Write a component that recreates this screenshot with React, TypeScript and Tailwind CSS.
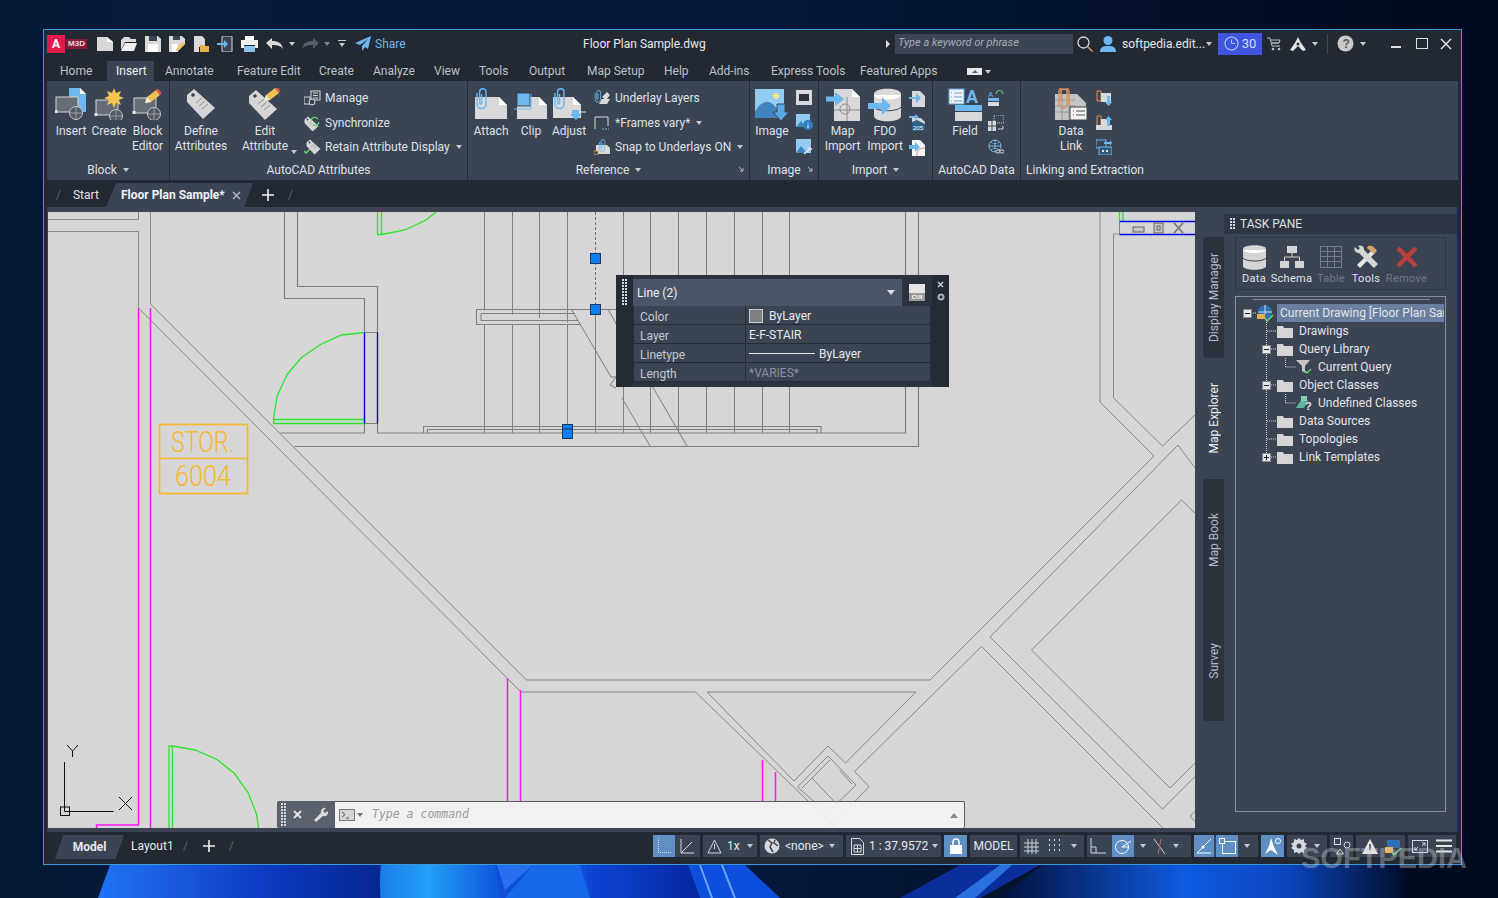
import type { ReactNode } from "react";

const G = "#d9d9d9";
const B = "#6cb8f0";

function Svg({ w, h, children, className }: { w: number; h: number; children: ReactNode; className?: string }) {
  return (
    <svg width={w} height={h} viewBox={`0 0 ${w} ${h}`} className={`shrink-0 ${className ?? ""}`}>
      {children}
    </svg>
  );
}

function Caret({ dim }: { dim?: boolean }) {
  return <span className={`inline-block shrink-0 border-x-[3px] border-t-[4px] border-x-transparent ${dim ? "border-t-[#7c838e]" : "border-t-[#c5c9ce]"}`} />;
}

function Corner() {
  return (
    <Svg w={7} h={7}>
      <path d="M1 1l4 4M5 2v3H2" stroke="#b5bac2" fill="none" />
    </Svg>
  );
}

/* ---------- large ribbon icons ---------- */
const blockBase = (x: number, y: number) => (
  <>
    <rect x={x} y={y} width={22} height={15} fill="#666c78" stroke="#d5d5d5" />
    <rect x={x - 1.5} y={y + 13} width={3} height={3} fill="#e5e5e5" />
    <circle cx={x + 20} cy={y + 16} r={6.5} fill="#545a66" stroke="#c5c5c5" />
    <path d={`M${x + 20} ${y + 10}v12M${x + 14} ${y + 16}h12`} stroke="#c5c5c5" strokeWidth={0.6} />
  </>
);

const Pencil = ({ x, y }: { x: number; y: number }) => (
  <g transform={`translate(${x} ${y})`}>
    <path d="M0 13l2-6 9-7 4 5-9 7z" fill="#f0c14f" />
    <path d="M11 0l2-1.5 3.5 4.5-1.5 2z" fill="#e55353" />
    <path d="M0 13l2-6 4 5z" fill="#ececec" />
  </g>
);

const Doc = ({ x, y, w, h, c = G }: { x: number; y: number; w: number; h: number; c?: string }) => (
  <>
    <path d={`M${x} ${y}h${w - 8}l8 8v${h - 8}h-${w}z`} fill={c} />
    <path d={`M${x + w - 8} ${y}l8 8h-8z`} fill="#fff" />
  </>
);

const Clip = ({ x, y, c = B }: { x: number; y: number; c?: string }) => (
  <g transform={`translate(${x} ${y})`}>
    <path d="M0 6v11a4.500 4.500 0 0 0 9 0V5a3.200 3.200 0 0 0-6.400 0v11a1 1 0 0 0 2 0V7" fill="none" stroke={c} strokeWidth={1.4} />
  </g>
);

const InsertIcon = () => (
  <Svg w={32} h={32}>
    <path d="M14 0h11l6 6v18H14z" fill={B} />
    <path d="M25 0l6 6h-6z" fill="#fff" />
    {blockBase(1, 9)}
  </Svg>
);
const CreateIcon = () => (
  <Svg w={32} h={32}>
    {blockBase(3, 12)}
    <path d="M21 0l2 5 5-2-2 5 5 2-5 2 2 5-5-2-2 5-2-5-5 2 2-5-5-2 5-2-2-5 5 2z" fill="#f5c452" />
  </Svg>
);
const EditorIcon = () => (
  <Svg w={32} h={32}>
    {blockBase(2, 10)}
    <Pencil x={13} y={2} />
  </Svg>
);
const Tag = ({ x, y, s = 1 }: { x: number; y: number; s?: number }) => (
  <g transform={`translate(${x} ${y}) scale(${s})`}>
    <path d="M1 7L8 1l21 19-12 11L1 14z" fill="#d5d5d5" />
    <circle cx={7} cy={7} r={1.8} fill="#3b4453" />
    <path d="M10 15l6-5M13 18l6-5M16 21l6-5" stroke="#8e8e8e" />
  </g>
);
const DefineIcon = () => (
  <Svg w={32} h={32}>
    <Tag x={1} y={0} />
  </Svg>
);
const EditAttrIcon = () => (
  <Svg w={34} h={32}>
    <Tag x={0} y={1} />
    <Pencil x={16} y={0} />
  </Svg>
);
const AttachIcon = () => (
  <Svg w={34} h={32}>
    <Doc x={1} y={9} w={32} h={22} />
    <Clip x={3} y={-1} />
  </Svg>
);
const ClipIcon = () => (
  <Svg w={34} h={32}>
    <Doc x={3} y={9} w={30} h={22} />
    <rect x={3} y={5} width={13} height={13} fill={B} stroke="#3b4453" />
    <path d="M0 21h17V6" stroke={B} fill="none" />
  </Svg>
);
const AdjustIcon = () => (
  <Svg w={34} h={32}>
    <Doc x={1} y={9} w={28} h={21} />
    <Clip x={3} y={-1} />
    <path d="M17 24h17" stroke="#e5e5e5" />
    <path d="M20 22h7v4h3l-6 6-6-6h2z" fill={B} />
  </Svg>
);
const ImageIcon = () => (
  <Svg w={34} h={34}>
    <rect x={0} y={1} width={29} height={29} fill="#93cbf2" />
    <circle cx={21} cy={8} r={3} fill="#f2e58a" />
    <path d="M0 24c5-9 9-10 13-10s8 5 12 11l4 5H0z" fill="#3f84bf" />
    <path d="M22 16h8v8h4l-8 9-8-9h4z" fill="#5aa9e6" stroke="#3b4453" />
  </Svg>
);
const MapImportIcon = () => (
  <Svg w={34} h={34}>
    <path d="M8 1h18l8 8v24H8z" fill={G} />
    <path d="M26 1l8 8h-8z" fill="#fff" />
    <path d="M8 22h26M21 9v24" stroke="#8a8a8a" />
    <circle cx={19} cy={21} r={5} fill="none" stroke="#8a8a8a" />
    <path d="M0 12h9V6l9 9-9 9v-6H0z" fill={B} transform="translate(0 -1) scale(1 .8)" />
  </Svg>
);
const FdoIcon = () => (
  <Svg w={34} h={34}>
    <path d="M6 6c0-7 27-7 27 0v22c0 7-27 7-27 0z" fill="#d9d9d9" />
    <path d="M6 7c2 6 25 6 27 0" fill="#fff" />
    <path d="M6 19c3 5 24 5 27 0" stroke="#3b4453" fill="none" />
    <path d="M0 15h14v-6l9 9-9 9v-6H0z" fill={B} />
  </Svg>
);
const FieldIcon = () => (
  <Svg w={34} h={34}>
    <rect x={1} y={1} width={15} height={15} fill="#f2f2f2" stroke="#5aa9e6" />
    <path d="M3 5h1M6 5h8M3 9h1M6 9h8M3 13h1M6 13h8" stroke="#5aa9e6" />
    <text x={18} y={15} fontSize={18} fontWeight={700} fill={B} fontFamily="Roboto">A</text>
    <rect x={7} y={17} width={27} height={6} fill={B} />
    <rect x={7} y={24} width={27} height={9} fill={G} />
  </Svg>
);
const DataLinkIcon = () => (
  <Svg w={34} h={32}>
    <path d="M1 6h22l9 9v17H1z" fill="#c4c4c4" />
    <path d="M1 12h20M1 18h20M1 24h20M8 6v26M15 6v26" stroke="#9a9a9a" />
    <path d="M7 14V4a3 3 0 0 1 6 0v12a4 4 0 0 1-8 0V4a5 5 0 0 1 10 0v12" fill="none" stroke="#e0935a" strokeWidth={1.5} />
    <rect x={16} y={19} width={17} height={13} fill="#f2f2f2" stroke="#3b4453" />
    <path d="M19 23h1M22 23h9M19 27h1M22 27h9" stroke="#555" />
  </Svg>
);

/* ---------- small ribbon icons ---------- */
const S16 = ({ children }: { children: ReactNode }) => <Svg w={17} h={16}>{children}</Svg>;
const smallIcons: Record<string, ReactNode> = {
  manage: <S16><rect x={7} y={1} width={9} height={9} fill="none" stroke={G} /><path d="M9 3h5M9 5.500h5M9 8h5" stroke={G} /><path d="M0 7h6v7H0z" fill="none" stroke={G} /><circle cx={8} cy={12} r={3} fill="#3b4453" stroke={G} /></S16>,
  sync: <S16><Tag x={0} y={1} s={0.5} /><path d="M7 5a4 4 0 0 1 7-1M15 7a4 4 0 0 1-6 3" stroke="#6fcf80" fill="none" strokeWidth={1.4} /></S16>,
  retain: <S16><Tag x={2} y={0} s={0.5} /><path d="M0 12l2 2 4-4" stroke="#6fcf80" fill="none" strokeWidth={1.5} /></S16>,
  underlay: <S16><g transform="scale(.6)"><Clip x={2} y={-1} /></g><path d="M8 7l5-5 3 3-4 5zM5 14l3-5h8l-3 5z" fill={G} /></S16>,
  frames: <S16><path d="M1 14V2h13v9" fill="none" stroke={G} /><path d="M8 14h7" stroke={B} strokeDasharray="2 1" /></S16>,
  snap: <S16><path d="M2 6h11l3 3v6H2z" fill={G} /><g transform="scale(.6)"><Clip x={9} y={-1} /></g><rect x={0} y={12} width={4} height={4} fill="#3b4453" stroke="#e8973a" /></S16>,
  imgFrame: <Svg w={16} h={16}><rect width={16} height={15} fill={G} /><rect x={3} y={4} width={10} height={7} fill="#2b313c" /></Svg>,
  imgInfo: <Svg w={17} h={17}><rect width={14} height={13} fill="#93cbf2" /><path d="M0 13l5-6 5 6z" fill="#3f84bf" /><circle cx={12} cy={11} r={5} fill="#2f7fc2" /><path d="M12 9v.8M12 11v3" stroke="#fff" /></Svg>,
  imgEdit: <Svg w={17} h={17}><rect width={15} height={14} fill="#93cbf2" /><path d="M0 14l5-7 6 7z" fill="#3f84bf" /><path d="M8 15l7-6M13 8a2 2 0 0 0 3 2" stroke="#e5e5e5" strokeWidth={1.6} fill="none" /></Svg>,
  imp1: <Svg w={16} h={17}><path d="M3 1h8l5 5v11H3z" fill={G} /><path d="M0 7h7V3l5 5-5 5V9H0z" fill={B} /></Svg>,
  imp2: <Svg w={16} h={17}><path d="M3 4h9l4 4v9H3z" fill={G} /><path d="M0 2h6V0l4 3-4 3V4H0z" fill={B} /><path d="M3 8l5-2 8 4v7H3z" fill="#2f5f86" /><text x={4} y={16} fontSize={6} fill="#fff" fontFamily="Liberation Sans">205</text></Svg>,
  imp3: <Svg w={16} h={17}><path d="M3 1h8l5 5v11H3z" fill="#f5f5f5" /><path d="M8 17c0-6 2-8 8-8" stroke="#e38b8b" fill="none" /><path d="M0 6h6V3l5 5-5 5v-3H0z" fill={B} /></Svg>,
  fld1: <Svg w={16} h={16}><text x={0} y={7} fontSize={8} fill={B} fontFamily="Roboto">A</text><path d="M8 4a3 3 0 0 1 7 0" stroke="#6fcf80" fill="none" /><rect y={8} width={11} height={3} fill={B} /><rect y={12} width={11} height={4} fill={G} /></Svg>,
  fld2: <Svg w={16} h={16}><rect x={6} y={0} width={10} height={8} fill="none" stroke={G} strokeDasharray="1 1" /><rect x={0} y={6} width={8} height={10} fill={G} /><path d="M4 6v10M0 11h8" stroke="#3b4453" /><path d="M10 14h5v-3" stroke={G} fill="none" /></Svg>,
  fld3: <Svg w={16} h={16}><circle cx={7} cy={7} r={6} fill="none" stroke="#7db7de" /><path d="M1 7h12M7 1v12M3 3c3 2 5 2 8 0M3 11c3-2 5-2 8 0" stroke="#7db7de" /><rect x={8} y={11} width={4} height={3} rx={1.5} fill="#3b4453" stroke="#e5e5e5" /><rect x={12} y={11} width={4} height={3} rx={1.5} fill="#3b4453" stroke="#e5e5e5" /></Svg>,
  lnk1: <Svg w={16} h={16}><path d="M1 1h4v10H1z" fill="none" stroke="#e0935a" /><rect x={5} y={3} width={10} height={9} fill={G} /><path d="M11 6h3v6h2l-3.500 4L9 12h2z" fill={B} /></Svg>,
  lnk2: <Svg w={16} h={16}><path d="M1 1h4v10H1z" fill="none" stroke="#e0935a" /><rect x={0} y={10} width={16} height={5} fill={G} /><rect x={5} y={4} width={6} height={6} fill={G} /><path d="M11 11h3V5h2l-3.500-4L9 5h2z" fill={B} /></Svg>,
  lnk3: <Svg w={16} h={16}><rect x={0} y={1} width={10} height={8} fill="none" stroke={B} /><rect x={3} y={8} width={13} height={8} fill="#33587a" stroke={B} /><path d="M6 12h2M10 12h2" stroke="#e5e5e5" strokeWidth={2} /><path d="M8 3h6V1l2 3-2 3V5H8z" fill={B} /></Svg>,
};

/* ---------- ribbon ---------- */
function Large({ icon, lines, w, caret }: { icon: ReactNode; lines: string[]; w: string; caret?: boolean }) {
  return (
    <div className={`${w} relative flex shrink-0 flex-col items-center`}>
      <div className="flex h-[43px] items-start justify-center pt-[7px]">{icon}</div>
      {lines.map((l) => (
        <div key={l} className="whitespace-nowrap text-[12px] leading-[15px] text-[#dfe2e6]">{l}</div>
      ))}
      {caret && <span className="absolute right-[-2px] top-[56px]"><Caret /></span>}
    </div>
  );
}

function SmallRow({ icon, label, caret }: { icon: string; label: string; caret?: boolean }) {
  return (
    <div className="flex h-[24.5px] items-center gap-[4px] whitespace-nowrap text-[12px] text-[#dfe2e6]">
      <span className="flex w-[17px] justify-center">{smallIcons[icon]}</span>
      <span>{label}</span>
      {caret && <span className="ml-[2px] flex"><Caret /></span>}
    </div>
  );
}

function IconCol({ icons, className }: { icons: string[]; className: string }) {
  return (
    <div className={`flex shrink-0 flex-col items-center pt-[5px] ${className}`}>
      {icons.map((i) => (
        <div key={i} className="flex h-[24.5px] items-center">{smallIcons[i]}</div>
      ))}
    </div>
  );
}

function Panel({ w, title, caret, corner, children, last, pad }: { w: string; title: string; caret?: boolean; corner?: boolean; children: ReactNode; last?: boolean; pad: string }) {
  return (
    <div className={`${w} flex shrink-0 flex-col ${last ? "" : "border-r border-[#262c36]"}`}>
      <div className={`flex h-[80px] ${pad}`}>{children}</div>
      <div className={`relative -mt-px flex h-[19px] items-center gap-[6px] text-[12px] text-[#dfe2e6] ${last ? "pl-[5px]" : "justify-center"}`}>
        <span className="whitespace-nowrap">{title}</span>
        {caret && <Caret />}
        {corner && <span className="absolute right-[4px] top-[6px] flex"><Corner /></span>}
      </div>
    </div>
  );
}

function Ribbon() {
  return (
    <div className="mx-[3px] flex h-[99px] shrink-0 bg-[#3b4453]">
      <Panel w="w-[123px]" title="Block" caret pad="pl-[5px]">
        <Large w="w-[38px]" icon={<InsertIcon />} lines={["Insert"]} />
        <Large w="w-[38px]" icon={<CreateIcon />} lines={["Create"]} />
        <Large w="w-[39px]" icon={<EditorIcon />} lines={["Block", "Editor"]} />
      </Panel>
      <Panel w="w-[298px]" title="AutoCAD Attributes" pad="pl-[1px]">
        <Large w="w-[60px]" icon={<DefineIcon />} lines={["Define", "Attributes"]} />
        <div className="w-[4px]" />
        <Large w="w-[60px]" icon={<EditAttrIcon />} lines={["Edit", "Attribute"]} caret />
        <div className="ml-[9px] flex flex-col pt-[5px]">
          <SmallRow icon="manage" label="Manage" />
          <SmallRow icon="sync" label="Synchronize" />
          <SmallRow icon="retain" label="Retain Attribute Display" caret />
        </div>
      </Panel>
      <Panel w="w-[282px]" title="Reference" caret corner pad="pl-[4px]">
        <Large w="w-[38px]" icon={<AttachIcon />} lines={["Attach"]} />
        <div className="w-[2px]" />
        <Large w="w-[38px]" icon={<ClipIcon />} lines={["Clip"]} />
        <Large w="w-[38px]" icon={<AdjustIcon />} lines={["Adjust"]} />
        <div className="ml-[6px] flex flex-col pt-[5px]">
          <SmallRow icon="underlay" label="Underlay Layers" />
          <SmallRow icon="frames" label="*Frames vary*" caret />
          <SmallRow icon="snap" label="Snap to Underlays ON" caret />
        </div>
      </Panel>
      <Panel w="w-[69px]" title="Image" corner pad="">
        <Large w="w-[44px]" icon={<ImageIcon />} lines={["Image"]} />
        <IconCol icons={["imgFrame", "imgInfo", "imgEdit"]} className="ml-[2px] w-[16px]" />
      </Panel>
      <Panel w="w-[114px]" title="Import" caret pad="pl-[2px]">
        <Large w="w-[43px]" icon={<MapImportIcon />} lines={["Map", "Import"]} />
        <Large w="w-[42px]" icon={<FdoIcon />} lines={["FDO", "Import"]} />
        <IconCol icons={["imp1", "imp2", "imp3"]} className="ml-[3px] w-[16px]" />
      </Panel>
      <Panel w="w-[88px]" title="AutoCAD Data" pad="pl-[9px]">
        <Large w="w-[46px]" icon={<FieldIcon />} lines={["Field"]} />
        <IconCol icons={["fld1", "fld2", "fld3"]} className="w-[16px]" />
      </Panel>
      <Panel w="w-[150px]" title="Linking and Extraction" last pad="pl-[25px]">
        <Large w="w-[50px]" icon={<DataLinkIcon />} lines={["Data", "Link"]} />
        <IconCol icons={["lnk1", "lnk2", "lnk3"]} className="w-[16px]" />
      </Panel>
    </div>
  );
}

/* ---------- title bar ---------- */
function TitleBar() {
  return (
    <div className="flex h-[27px] shrink-0 items-center text-[12px] text-[#e8eaed]">
      <div className="flex w-[539px] shrink-0 items-center pl-[3px]">
        <div className="flex h-[18px] w-[18px] items-center justify-center bg-[#e31b4c] text-[12px] font-bold leading-none text-white">A</div>
        <div className="ml-px flex h-[10px] w-[21px] items-center justify-center bg-[#8a1a35] font-['Liberation_Sans'] text-[8px] font-bold text-[#f3d5dc]">M3D</div>
        <div className="ml-[10px] flex items-center gap-[8px]">
          <Svg w={16} h={14}><path d="M0 0h10l6 5v9H0z" fill={G} /><path d="M10 0l6 5h-6z" fill="#fff" /></Svg>
          <Svg w={16} h={14}><path d="M3 0h5l2 2h5v3H4L0 13V3z" fill={G} /><path d="M4 6h12l-3 8H0z" fill="#eee" /></Svg>
          <Svg w={16} h={16}><path d="M0 0h13l3 3v13H0z" fill={G} /><rect x={4} width={8} height={5} fill="#3b4453" /><rect x={3} y={8} width={10} height={8} fill="#fff" /></Svg>
          <Svg w={16} h={16}><path d="M0 0h13l3 3v5l-8 8H0z" fill={G} /><rect x={4} width={7} height={4} fill="#3b4453" /><rect x={3} y={8} width={6} height={8} fill="#fff" /><path d="M7 15l1-3 6-6 2 2-6 6z" fill="#f0c14f" /></Svg>
          <Svg w={16} h={16}><path d="M1 0h8l3 3v8H1zM1 11h5v5H1z" fill={G} /><path d="M7 9h3l1 1h5v6H7z" fill="#e8b04a" /></Svg>
          <Svg w={16} h={16}><rect x={5} y={0} width={10} height={16} rx={1} fill="#3b4453" stroke={G} /><path d="M0 7h7V4l4 4-4 4V9H0z" fill={B} /></Svg>
          <Svg w={17} h={16}><rect x={4} width={9} height={4} fill="#fff" /><path d="M0 4h17v8h-3V9H3v3H0z" fill="#f0f0f0" /><rect x={3} y={10} width={11} height={6} fill="#8cc4ee" /></Svg>
          <Svg w={17} h={12}><path d="M6 0v3c6 0 10 2 11 8-2-3-5-4-11-4v4L0 5z" fill={G} /></Svg>
        </div>
        <span className="ml-[6px] flex"><Caret /></span>
        <Svg w={17} h={12} className="ml-[7px]"><path d="M11 0v3C5 3 1 5 0 11c2-3 5-4 11-4v4l6-6z" fill="#565d69" /></Svg>
        <span className="ml-[5px] flex"><Caret dim /></span>
        <span className="ml-[8px] flex flex-col items-center gap-[2px]"><span className="h-px w-[8px] bg-[#c5c9ce]" /><Caret /></span>
        <Svg w={16} h={15} className="ml-[9px]"><path d="M16 0L0 7l5 2 8-6-6 7v5l3-4 3 2z" fill={B} /></Svg>
        <span className="ml-[4px] text-[#73b9ec]">Share</span>
      </div>
      <div className="w-[303px] shrink-0">Floor Plan Sample.dwg</div>
      <span className="h-0 w-0 shrink-0 border-y-[4px] border-l-[4px] border-y-transparent border-l-[#e0e0e0]" />
      <div className="ml-[5px] flex h-[20px] w-[178px] shrink-0 items-center bg-[#3b4453] pl-[3px] text-[11px] italic text-[#a9afb8]">Type a keyword or phrase</div>
      <Svg w={16} h={16} className="ml-[4px]"><circle cx={6.5} cy={6.5} r={5.5} fill="none" stroke="#d9d9d9" strokeWidth={1.3} /><path d="M10.500 10.500l5 5" stroke="#d9a36a" strokeWidth={1.5} /></Svg>
      <Svg w={16} h={16} className="ml-[7px]"><circle cx={8} cy={4.500} r={4.500} fill={B} /><path d="M0 16c0-5 3-6 8-6s8 1 8 6z" fill={B} /></Svg>
      <span className="ml-[6px] w-[84px] whitespace-nowrap">softpedia.edit...</span>
      <Caret />
      <div className="ml-[6px] flex h-[22px] w-[44px] shrink-0 items-center justify-center gap-[3px] bg-[#3f55e0] text-[13px] text-[#cfe0ff]">
        <Svg w={15} h={15}><circle cx={7.500} cy={7.500} r={6.500} fill="none" stroke="#a9cdfa" strokeWidth={1.2} /><path d="M7.500 3.500v4h3.500" stroke="#a9cdfa" fill="none" /></Svg>
        30
      </div>
      <Svg w={14} h={14} className="ml-[5px]"><path d="M0 1h3l2 8h8M4 3h9l-1 3H5M4 6h8" stroke="#b9bec5" fill="none" /><circle cx={6} cy={12} r={1.3} fill="#b9bec5" /><circle cx={12} cy={12} r={1.3} fill="#b9bec5" /></Svg>
      <Svg w={16} h={14} className="ml-[9px]"><path d="M8 0l2.500 5L16 13l-3 1-5-5-5 5-3-1 5.500-8z" fill="#e5e5e5" /><circle cx={8} cy={7} r={1.5} fill="#222933" /></Svg>
      <span className="ml-[6px] flex"><Caret /></span>
      <span className="ml-[9px] h-[20px] w-px bg-[#3f4754]" />
      <Svg w={17} h={17} className="ml-[9px]"><circle cx={8.500} cy={8.500} r={8} fill="#c9c9c9" /><text x={5.500} y={13} fontSize={12} fontWeight={700} fill="#555" fontFamily="Liberation Sans">?</text></Svg>
      <span className="ml-[6px] flex"><Caret /></span>
      <span className="ml-[25px] mt-[6px] h-[2px] w-[10px] bg-[#e0e0e0]" />
      <span className="ml-[15px] h-[11px] w-[12px] border border-[#e0e0e0]" />
      <Svg w={12} h={12} className="ml-[12px]"><path d="M1 1l10 10M11 1L1 11" stroke="#e8e8e8" strokeWidth={1.4} /></Svg>
    </div>
  );
}

function MenuTabs() {
  const tabs: [string, string][] = [
    ["Annotate", "w-[72px]"], ["Feature Edit", "w-[82px]"], ["Create", "w-[54px]"], ["Analyze", "w-[61px]"], ["View", "w-[45px]"], ["Tools", "w-[50px]"],
    ["Output", "w-[58px]"], ["Map Setup", "w-[77px]"], ["Help", "w-[45px]"], ["Add-ins", "w-[62px]"], ["Express Tools", "w-[89px]"], ["Featured Apps", "w-[107px]"],
  ];
  return (
    <div className="flex h-[24px] shrink-0 items-end pl-[16px] text-[12px] text-[#bcc1c8]">
      <div className="flex h-[20px] w-[47px] items-center">Home</div>
      <div className="flex h-[20px] w-[47px] items-center bg-[#3b4453] pl-[9px] text-[#f0f1f3]">Insert</div>
      <div className="w-[11px]" />
      {tabs.map(([t, w]) => (
        <div key={t} className={`${w} flex h-[20px] shrink-0 items-center whitespace-nowrap`}>{t}</div>
      ))}
      <div className="mb-[6px] flex items-center gap-[3px]">
        <span className="flex h-[7px] w-[15px] items-center justify-center bg-[#e8e8e8]">
          <span className="border-x-[3px] border-b-[3px] border-x-transparent border-b-[#666]" />
        </span>
        <Caret />
      </div>
    </div>
  );
}

function DocTabs() {
  return (
    <div className="flex h-[27px] shrink-0 items-end text-[12px] text-[#e0e2e6]">
      <span className="mb-[3px] ml-[12px] text-[#5a626e]">/</span>
      <span className="mb-[3px] ml-[12px] w-[33px]">Start</span>
      <div className="flex h-[24px] w-[147px] items-center bg-[#3b4453] pl-[15px] font-bold text-[#f2f3f5] [clip-path:polygon(7%_0,100%_0,94%_100%,0_100%)]">
        <span className="w-[111px] whitespace-nowrap">Floor Plan Sample*</span>
        <Svg w={9} h={9}><path d="M1 1l7 7M8 1L1 8" stroke="#a9afb8" strokeWidth={1.6} /></Svg>
      </div>
      <Svg w={12} h={12} className="mb-[6px] ml-[9px]"><path d="M6 0v12M0 6h12" stroke="#f0f0f0" strokeWidth={1.6} /></Svg>
      <span className="mb-[3px] ml-[14px] text-[#5a626e]">/</span>
    </div>
  );
}

/* ---------- drawing ---------- */
function Drawing() {
  const stairs = [484.5, 512.5, 539.5, 567.5, 623.5, 650.5, 678.5, 706.5, 734.5, 762.5, 789.5];
  const walls = [
    "M48 219.5H138.5V212M48 231.5H138.5V308L521 692H695.5L838 830",
    "M150.5 212V304L526.5 680H930L1154 456L1100 402V212",
    "M707 692H916L845.5 763L828 746L794 781Z",
    "M1113.5 234H1119.5M1113.5 234V398L1162.5 446L1195 415",
    "M981.5 646.5L854.5 771.5L869 786.5L830 828M981.5 646.5L1163 828",
    "M990 637L1178 445L1195 468M990 637L1162.5 809L1195 776.5",
    "M1031.5 650L1181.5 500L1195 513M1031.5 650L1170 788L1195 763",
    "M1195 811.5L1190 816L1195 821.5",
    "M797.5 787L828 756L856 785L827 813Z M802 788L830 760M812 778L845 813M840 771L852 784",
  ];
  return (
    <svg width={1147} height={616} viewBox="48 212 1147 616" className="block">
      <g fill="none" stroke="#808080" strokeWidth={1}>
        {walls.map((d) => <path key={d} d={d} strokeWidth={0.9} />)}
        <path d="M284.500 212V298.500H364.500V433H280.500M297.500 212V286.500H377.500V433H905.500V212M294.500 446.500H918.500V212" strokeWidth={1.2} />
        <path d="M364.500 332.500H377.500M364.500 423.500H377.500" />
        {stairs.map((x) => <path key={x} d={`M${x} 212V433`} strokeWidth={1} />)}
        <path d="M595.500 314V433" />
        <path d="M476.500 309.500H617M476.500 309.500V324.500H580M481 313.500V320.500H578M481 313.500H575" strokeWidth={1.1} fill="#d6d6d6" />
        <path d="M484.500 325V433M512.500 325V433M539.500 325V433M567.500 325V433M484.500 212V309M512.500 212V309M539.500 212V309M567.500 212V309" />
        <path d="M423.500 433V426.500H821V433M427.500 433V429.500H817V433" strokeWidth={1.1} />
        <path d="M571.500 309.500L611 377L616 377L610 385L616 388M608 309L625 340M622 398L650 446M652.500 386.500L687 446" />
      </g>
      <path d="M595.500 212V304" stroke="#555" strokeDasharray="3 2" strokeWidth={0.8} />
      <g fill="none" stroke="#ff17ff" strokeWidth={1.5}>
        <path d="M138.500 308V825H96.500V828M150.500 308V828" />
        <path d="M507.500 678V801M520.500 690V801M762.500 760V801M775.500 772V801" />
      </g>
      <g fill="none" stroke="#2be52b" strokeWidth={1.3}>
        <path d="M273.500 419.500H364.500V423.500H273.500ZM273.500 419L277 396.500L287 374.500L301.500 357.500L320.500 344.500L341.500 335L364.500 332.500" />
        <path d="M377.500 212V234.500H381.500V212M381.500 234.500L405 230L426 220L436 212" />
        <path d="M169 828V746H172.500V828M172.500 746L195 750L217 759.500L234.500 773.500L248 792.500L256.500 814L258.500 828" />
        <path d="M1119.500 212V221M1123 212V221" />
      </g>
      <g fill="none" stroke="#0000e6" strokeWidth={1.3}>
        <path d="M364.500 332.500V423.500M377.500 332.500V423.500" />
        <path d="M1119.500 221.500H1195M1119.500 234.500H1195" />
      </g>
      <path d="M1119.500 221V234" stroke="#808080" fill="none" />
      <g fill="none" stroke="#666" strokeWidth={1}>
        <rect x={1133} y={227} width={11} height={5} fill="#c5c5c5" />
        <rect x={1154} y={223} width={9} height={10} fill="#c5c5c5" />
        <rect x={1157} y={226} width={3} height={4} />
        <path d="M1174 223L1183 233M1183 223L1174 233" strokeWidth={1.8} stroke="#777" />
      </g>
      <g fill="none" stroke="#f5b82e" strokeWidth={1.7}>
        <rect x={159.500} y={424.500} width={88} height={69} />
        <path d="M159.500 458.500H247.500" />
      </g>
      <text x={171} y={452} fontSize={30} fontFamily="Roboto" fontWeight={300} textLength={63} lengthAdjust="spacingAndGlyphs" fill="#f5b82e">STOR.</text>
      <text x={175} y={486} fontSize={30} fontFamily="Roboto" fontWeight={300} textLength={56} lengthAdjust="spacingAndGlyphs" fill="#f5b82e">6004</text>
      <g fill="#0a7ff0" stroke="#17385c" strokeWidth={1}>
        <rect x={590.500} y={253.500} width={10} height={10} />
        <rect x={590.500} y={304.500} width={10} height={10} />
        <rect x={562.500} y={424.500} width={10} height={14} />
        <path d="M562.500 429H572.500" />
      </g>
      <g fill="none" stroke="#111" strokeWidth={1}>
        <path d="M64.500 762V811.500H113.500" />
        <rect x={60.500} y={807} width={9} height={8.500} />
        <path d="M67 745L72.500 751L78 745M72.500 751V757" />
        <path d="M119 797L132 810M132 797L119 810" />
      </g>
    </svg>
  );
}

function Grip({ cols = 2, rows = 9 }: { cols?: number; rows?: number }) {
  const dots = [];
  for (let c = 0; c < cols; c++) for (let r = 0; r < rows; r++) dots.push(<rect key={`${c}-${r}`} x={c * 3} y={r * 3} width={2} height={2} fill="#d5d8dc" />);
  return <Svg w={cols * 3} h={rows * 3}>{dots}</Svg>;
}

function PropsPanel() {
  const rows: [string, ReactNode][] = [
    ["Color", <span className="flex items-center gap-[6px]"><span className="h-[14px] w-[14px] border border-[#c9c9c9] bg-[#808080]" />ByLayer</span>],
    ["Layer", "E-F-STAIR"],
    ["Linetype", <span className="flex items-center gap-[4px]"><span className="h-px w-[66px] bg-[#e5e5e5]" />ByLayer</span>],
    ["Length", <span className="text-[#8a919c]">*VARIES*</span>],
  ];
  return (
    <div className="absolute left-[568px] top-[63px] flex h-[112px] w-[333px] bg-[#252b36]">
      <div className="w-[17px] shrink-0 pl-[6px] pt-[4px]"><Grip /></div>
      <div className="w-[299px] shrink-0 bg-[#2c333f] pt-[4px]">
        <div className="flex items-center">
          <div className="flex h-[27px] w-[269px] items-center justify-between bg-[#4a5568] pl-[4px] pr-[7px] text-[12px] text-[#f0f1f3]">
            Line (2)
            <span className="border-x-[4px] border-t-[5px] border-x-transparent border-t-[#e0e0e0]" />
          </div>
          <div className="ml-[7px] flex h-[17px] w-[16px] items-end justify-center bg-[#e5e5e5] font-['Liberation_Sans'] text-[6px] font-bold leading-[8px] text-[#333]">
            <span className="w-full bg-[#9a9a9a] text-center text-white">CUI</span>
          </div>
        </div>
        <div className="w-[298px] border-l border-r border-[#262c36]">
          {rows.map(([k, v]) => (
            <div key={k} className="flex h-[19px] border-b border-[#262c36] bg-[#3b4453] pt-px text-[12px]">
              <div className="w-[112px] border-r border-[#262c36] pl-[6px] pt-px text-[#c5c9ce]">{k}</div>
              <div className="flex items-center pl-[3px] text-[#e8eaed]">{v}</div>
            </div>
          ))}
        </div>
      </div>
      <div className="flex flex-1 flex-col items-center gap-[5px] pt-[6px]">
        <Svg w={7} h={7}><path d="M1 1l5 5M6 1L1 6" stroke="#c5c9ce" strokeWidth={1.6} /></Svg>
        <Svg w={8} h={8}><circle cx={4} cy={4} r={2.500} fill="none" stroke="#a9afb8" strokeWidth={2} /></Svg>
      </div>
    </div>
  );
}

function CommandBar() {
  return (
    <div className="absolute left-[229px] top-[589px] flex h-[27px] w-[688px]">
      <div className="flex w-[58px] items-center rounded-l-[2px] bg-[#5a606c] pl-[4px]">
        <Grip rows={8} />
        <Svg w={9} h={9} className="ml-[6px]"><path d="M1 1l7 7M8 1L1 8" stroke="#e5e5e5" strokeWidth={1.8} /></Svg>
        <Svg w={15} h={15} className="ml-[11px]"><path d="M1 13l7-7a4 4 0 0 1 5-5l-3 3 2 2 3-2a4 4 0 0 1-5 5l-7 6z" fill="#d9d9d9" /></Svg>
      </div>
      <div className="flex flex-1 items-center rounded-r-[2px] border-r border-t border-[#55585f] bg-[#f4f4f4]/90 pl-[4px] pr-[4px]">
        <Svg w={16} h={12}><rect x={0.500} y={0.500} width={15} height={11} fill="#d5d5d5" stroke="#777" /><path d="M3 3l3 2.500L3 8M7 9h3" stroke="#555" fill="none" /></Svg>
        <span className="ml-[2px] flex border-x-[3px] border-t-[4px] border-x-transparent border-t-[#777]" />
        <span className="ml-[9px] font-['DejaVu_Sans_Mono'] text-[11.5px] italic text-[#9a9a9a]">Type a command</span>
        <span className="ml-auto mr-[2px] border-x-[4px] border-b-[5px] border-x-transparent border-b-[#888]" />
      </div>
    </div>
  );
}

/* ---------- task pane ---------- */
const Folder = () => (
  <Svg w={16} h={13}><path d="M0 1h6l1 2h9v10H0z" fill="#d5d5d5" /></Svg>
);
const Expander = ({ plus }: { plus?: boolean }) => (
  <span className="relative flex h-[9px] w-[9px] shrink-0 items-center justify-center border border-[#888] bg-[#e5e5e5]">
    <span className="h-px w-[5px] bg-[#222]" />
    {plus && <span className="absolute h-[5px] w-px bg-[#222]" />}
  </span>
);

const treeRows: { label: string; level: number; exp?: "minus" | "plus"; icon?: ReactNode }[] = [
  { label: "Drawings", level: 1 },
  { label: "Query Library", level: 1, exp: "minus" },
  { label: "Current Query", level: 2, icon: <Svg w={16} h={16}><path d="M0 1h14L9 7v7l-3-2V7z" fill="#c5c5c5" /><path d="M9 12l2 2 4-4" stroke="#6fcf80" strokeWidth={1.4} fill="none" /></Svg> },
  { label: "Object Classes", level: 1, exp: "minus" },
  { label: "Undefined Classes", level: 2, icon: <Svg w={16} h={16}><path d="M0 13l5-8h7l-4 8z" fill="#5fb89a" /><rect x={5} y={1} width={6} height={5} fill="#7fd0b4" /><text x={9} y={15} fontSize={11} fontWeight={700} fill="#e5e5e5" fontFamily="Liberation Sans">?</text></Svg> },
  { label: "Data Sources", level: 1 },
  { label: "Topologies", level: 1 },
  { label: "Link Templates", level: 1, exp: "plus" },
];

function Tree() {
  return (
    <div className="relative mt-[6px] h-[516px] w-[211px] border border-[#8a8f96] text-[12px] text-[#e3e5e8]">
      <svg width={208} height={200} viewBox="1237 297 208 200" className="absolute left-0 top-0">
        <path d="M1252 313H1258M1267.500 322V457M1268 331H1278M1268 349H1278M1268 385H1278M1268 421H1278M1268 439H1278M1268 457H1278M1286.500 358V367H1297M1286.500 394V403H1297" stroke="#d5d5d5" strokeDasharray="1 1" fill="none" />
      </svg>
      <div className="relative">
        <div className="ml-[17px] mt-[2px] h-px w-[177px] bg-[#8a8f96]" />
        <div className="mt-[4px] flex h-[18px] items-center pl-[7px]">
          <Expander />
          <Svg w={17} h={17} className="ml-[5px]"><circle cx={8} cy={7} r={7} fill="#2f6fb3" /><path d="M1 7h14M8 0v9" stroke="#cfe0f0" /><rect x={0} y={9} width={8} height={5} fill="#e8b04a" /><path d="M8 13l2 3 6-6" stroke="#6fcf80" strokeWidth={1.6} fill="none" /></Svg>
          <div className="ml-[3px] h-[18px] w-[167px] overflow-hidden whitespace-nowrap bg-[#6a7f9f] pl-[3px] leading-[18px]">Current Drawing [Floor Plan Sample]</div>
        </div>
        {treeRows.map((r) =>
          r.level === 1 ? (
            <div key={r.label} className="flex h-[18px] items-center pl-[26px]">
              <span className="flex w-[9px]">{r.exp && <Expander plus={r.exp === "plus"} />}</span>
              <span className="ml-[6px] flex"><Folder /></span>
              <span className="ml-[6px]">{r.label}</span>
            </div>
          ) : (
            <div key={r.label} className="flex h-[18px] items-center pl-[60px]">
              {r.icon}
              <span className="ml-[6px]">{r.label}</span>
            </div>
          ),
        )}
      </div>
    </div>
  );
}

function ToolBtn({ w, icon, label, dim }: { w: string; icon: ReactNode; label: string; dim?: boolean }) {
  return (
    <div className={`${w} flex shrink-0 flex-col items-center`}>
      <div className="flex h-[28px] items-center">{icon}</div>
      <div className={`text-[11px] leading-[15px] tracking-[0.3px] ${dim ? "text-[#707782]" : "text-[#e3e5e8]"}`}>{label}</div>
    </div>
  );
}

function TaskPane() {
  return (
    <div className="mt-[2px] flex h-[611px] w-[233px] flex-col rounded-bl-[3px] rounded-tl-[3px]">
      <div className="flex h-[20px] shrink-0 items-center rounded-tl-[3px] bg-[#2e3543] pl-[6px] text-[12px] text-[#e0e2e6]">
        <Grip cols={2} rows={4} />
        <span className="ml-[4px]">TASK PANE</span>
      </div>
      <div className="ml-[11px] mt-[3px] flex h-[53px] w-[211px] shrink-0 items-start border border-[#2e3543] pl-[3px] pt-[5px]">
        <ToolBtn w="w-[30px]" label="Data" icon={<Svg w={23} h={25}><path d="M0 4c0-5 23-5 23 0v17c0 5-23 5-23 0z" fill="#d5d5d5" /><path d="M0 5c2 4 21 4 23 0" fill="#fff" /><path d="M0 13c2 4 21 4 23 0" stroke="#3b4453" fill="none" /></Svg>} />
        <ToolBtn w="w-[45px]" label="Schema" icon={<Svg w={24} h={23}><rect x={7} y={0} width={10} height={7} fill="#d5d5d5" /><rect x={0} y={15} width={9} height={7} fill="#d5d5d5" /><rect x={15} y={15} width={9} height={7} fill="#d5d5d5" /><path d="M12 7v4M4.500 15v-4h15v4" stroke="#d5d5d5" fill="none" /></Svg>} />
        <ToolBtn w="w-[34px]" dim label="Table" icon={<Svg w={22} h={22}><rect x={0.500} y={0.500} width={21} height={21} fill="none" stroke="#757c87" /><path d="M0 5.500h22M0 10.500h22M0 15.500h22M7.500 0v22M14.500 0v22" stroke="#757c87" /></Svg>} />
        <ToolBtn w="w-[36px]" label="Tools" icon={<Svg w={24} h={24}><path d="M3 20L18 5l3 3L6 23z" fill="#e5e5e5" /><path d="M14 1c3-1 6 0 9 5l-3 3-7-6z" fill="#d9a36a" /><path d="M20 23L5 8a4 4 0 0 1-4-6l3 3 2-2-2-2a4 4 0 0 1 6 4l14 14z" fill="#d5d5d5" /></Svg>} />
        <ToolBtn w="w-[45px]" dim label="Remove" icon={<Svg w={22} h={22}><path d="M2 2l18 18M20 2L2 20" stroke="#b8403f" strokeWidth={4.5} /></Svg>} />
      </div>
      <div className="ml-[11px]"><Tree /></div>
    </div>
  );
}

function SideTabs() {
  const tabs = ["Display Manager", "Map Explorer", "Map Book", "Survey"];
  return (
    <div className="ml-[8px] mt-[25px] flex w-[21px] flex-col">
      {tabs.map((t) => (
        <div key={t} className={`flex h-[121px] items-center justify-center rounded-l-[3px] text-[12px] ${t === "Map Explorer" ? "bg-[#3b4453] text-[#eceef0]" : "bg-[#2c333f] text-[#b5bac2]"}`}>
          <span className="whitespace-nowrap [writing-mode:vertical-rl] rotate-180">{t}</span>
        </div>
      ))}
    </div>
  );
}

/* ---------- status bar ---------- */
const C = "#d5d8dc";
function Grp({ w, on, children }: { w: string; on?: boolean; children: ReactNode }) {
  return <div className={`${w} flex h-[22px] shrink-0 items-center ${on ? "justify-center bg-[#5f8fc4]" : "bg-[#3b4453]"}`}>{children}</div>;
}
function On({ w, children }: { w: string; children: ReactNode }) {
  return <span className={`${w} flex h-[22px] shrink-0 items-center justify-center bg-[#5f8fc4]`}>{children}</span>;
}

function StatusBar() {
  return (
    <div className="flex h-[32px] shrink-0 pt-[3px] text-[12px] text-[#e6e8eb]">
      <div className="ml-[11px] flex h-[24px] w-[69px] items-center justify-center bg-[#3b4453] font-bold [clip-path:polygon(12%_0,100%_0,88%_100%,0_100%)]">Model</div>
      <span className="ml-[7px] mt-[2px] w-[52px]">Layout1</span>
      <span className="mt-[2px] text-[#5a626e]">/</span>
      <Svg w={12} h={12} className="ml-[15px] mt-[5px]"><path d="M6 0v12M0 6h12" stroke="#f0f0f0" strokeWidth={1.6} /></Svg>
      <span className="ml-[14px] mt-[2px] text-[#5a626e]">/</span>
      <div className="ml-auto mr-[5px] flex gap-[3px] text-[12px]">
        <Grp w="w-[47px]">
          <On w="w-[22px]"><Svg w={14} h={16}><path d="M1.500 0v14.500H14" stroke={C} strokeDasharray="1 1" fill="none" /></Svg></On>
          <Svg w={14} h={15} className="ml-[5px]"><path d="M1 0v14h13M1 14L12 3" stroke={C} fill="none" /></Svg>
        </Grp>
        <Grp w="w-[54px]">
          <Svg w={15} h={15} className="ml-[4px]"><path d="M7.500 1L14 14H1z" fill="none" stroke={C} /><path d="M7.500 5v5" stroke={C} /></Svg>
          <span className="ml-[5px]">1x</span>
          <span className="ml-[7px] flex"><Caret /></span>
        </Grp>
        <Grp w="w-[83px]">
          <Svg w={16} h={16} className="ml-[4px]"><circle cx={8} cy={8} r={7.500} fill="#d5d8dc" /><path d="M4 2l4 3-2 4 3 5M11 2l-1 3 4 3" stroke="#3b4453" fill="none" strokeWidth={1.5} /></Svg>
          <span className="ml-[5px]">&lt;none&gt;</span>
          <span className="ml-[5px] flex"><Caret /></span>
        </Grp>
        <Grp w="w-[95px]">
          <Svg w={13} h={17} className="ml-[5px]"><path d="M0.500 0.500h8l4 4v12h-12z" fill="none" stroke={C} /><path d="M3 7h7v7H3zM6.500 7v7M3 10.500h7" stroke={C} fill="none" /></Svg>
          <span className="ml-[5px] whitespace-nowrap">1 : 37.9572</span>
          <span className="ml-[4px] flex"><Caret /></span>
        </Grp>
        <Grp w="w-[23px]" on>
          <Svg w={12} h={16}><path d="M3 7V4a3 3 0 0 1 6 0v3" stroke="#fff" fill="none" strokeWidth={1.5} /><rect y={7} width={12} height={9} fill="#fff" /></Svg>
        </Grp>
        <Grp w="w-[47px]"><span className="w-full text-center">MODEL</span></Grp>
        <Grp w="w-[64px]">
          <Svg w={15} h={15} className="ml-[4px]"><path d="M4 0v15M8 0v15M12 0v15M0 4h15M0 8h15M0 12h15" stroke={C} /></Svg>
          <Svg w={14} h={14} className="ml-[9px]"><path d="M1 1h1M6 1h1M11 1h1M1 6h1M6 6h1M11 6h1M1 11h1M6 11h1M11 11h1" stroke={C} strokeWidth={2} /></Svg>
          <span className="ml-[9px] flex"><Caret /></span>
        </Grp>
        <Grp w="w-[104px]">
          <Svg w={16} h={16} className="ml-[3px]"><path d="M1 0v15h15" stroke={C} fill="none" /><path d="M1 9h5v6" stroke={C} fill="none" /></Svg>
          <On w="w-[22px] ml-[6px]"><Svg w={18} h={16}><circle cx={8} cy={9} r={6.500} fill="none" stroke="#fff" /><path d="M8 9l9-6M8 9h7" stroke="#fff" fill="none" /></Svg></On>
          <span className="ml-[6px] flex"><Caret /></span>
          <Svg w={13} h={17} className="ml-[7px]"><path d="M1 1l11 15" stroke="#c5c9ce" /><path d="M8 1L5 16" stroke="#d65c5c" /></Svg>
          <span className="ml-[7px] flex"><Caret /></span>
        </Grp>
        <Grp w="w-[64px]">
          <On w="w-[20px]"><Svg w={16} h={15}><path d="M15 0L1 14h14" stroke="#fff" fill="none" /><circle cx={7} cy={8} r={1.500} fill="#fff" /></Svg></On>
          <On w="w-[22px] ml-[2px]"><Svg w={17} h={16}><rect x={3.500} y={3.500} width={13} height={12} fill="none" stroke="#fff" /><rect x={0.500} y={0.500} width={5} height={5} fill="#5f8fc4" stroke="#fff" /></Svg></On>
          <span className="ml-[6px] flex"><Caret /></span>
        </Grp>
        <Grp w="w-[23px]" on>
          <Svg w={18} h={18}><path d="M7 1l3 9 4 8-7-5-6 4 4-8z" fill="#fff" /><circle cx={14} cy={4} r={2.500} fill="none" stroke="#fff" /></Svg>
        </Grp>
        <Grp w="w-[40px]">
          <Svg w={16} h={16} className="ml-[4px]"><path d="M8 0l2 2 3-1 0 3 3 2-2 2 2 2-3 2v3l-3-1-2 2-2-2-3 1v-3l-3-2 2-2-2-2 3-2V1l3 1z" fill={C} /><circle cx={8} cy={8} r={2.500} fill="#3b4453" /></Svg>
          <span className="ml-[7px] flex"><Caret /></span>
        </Grp>
        <Grp w="w-[23px]">
          <Svg w={17} h={17} className="ml-[4px]"><rect x={0.500} y={0.500} width={6} height={6} fill="none" stroke={C} /><circle cx={13} cy={7} r={3} fill="none" stroke={C} /><path d="M6 11l3.500 5h-7z" fill="none" stroke={C} /></Svg>
        </Grp>
        <Grp w="w-[49px]">
          <Svg w={16} h={15} className="ml-[6px]"><path d="M8 0l8 15H0z" fill="#e5e5e5" /><path d="M8 5v6" stroke="#3b4453" strokeWidth={1.5} /></Svg>
          <Svg w={17} h={17} className="ml-[7px]"><path d="M2 2h13v8H2z" fill="#2f6fb3" /><rect x={0} y={9} width={8} height={6} fill="#e8b04a" /><path d="M7 14l2 3 7-7" stroke="#6fcf80" strokeWidth={1.6} fill="none" /></Svg>
        </Grp>
        <Grp w="w-[48px]">
          <Svg w={16} h={13} className="ml-[4px]"><rect x={0.500} y={0.500} width={15} height={12} fill="none" stroke={C} /><path d="M10 3h3v3M13 3l-3 3M3 7v3h3M3 10l3-3" stroke={C} fill="none" /></Svg>
          <Svg w={16} h={14} className="ml-[8px]"><path d="M0 1.500h16M0 7h16M0 12.500h16" stroke="#e5e5e5" strokeWidth={2} /></Svg>
        </Grp>
      </div>
    </div>
  );
}

function Wallpaper() {
  return (
    <svg width={1498} height={898} viewBox="0 0 1498 898" className="absolute left-0 top-0">
      <defs>
        <linearGradient id="w1" x1="0" x2="1" y1="0" y2="0">
          <stop offset="0" stopColor="#2273f7" />
          <stop offset="0.6" stopColor="#0b39c0" />
          <stop offset="1" stopColor="#06268e" />
        </linearGradient>
        <linearGradient id="w2" x1="0" x2="1" y1="0" y2="0">
          <stop offset="0" stopColor="#1c7be8" />
          <stop offset="0.4" stopColor="#22a0f7" />
          <stop offset="1" stopColor="#0f54dc" />
        </linearGradient>
        <linearGradient id="w3" x1="0" x2="1" y1="0" y2="0">
          <stop offset="0" stopColor="#03103a" />
          <stop offset="0.45" stopColor="#0e5ae0" />
          <stop offset="0.7" stopColor="#0c46c0" />
          <stop offset="1" stopColor="#020c2a" />
        </linearGradient>
        <linearGradient id="w4" x1="0" x2="1" y1="0" y2="0">
          <stop offset="0" stopColor="#0c46d6" />
          <stop offset="1" stopColor="#0726a0" />
        </linearGradient>
      </defs>
      <path d="M110 865L98 898H385L382 865Z" fill="url(#w1)" />
      <path d="M380 865V898H600V865Z" fill="#0f4fd8" />
      <path d="M382 865C379 878 380 890 381 898H500L495 865Z" fill="url(#w2)" />
      <path d="M497 865H533L505 890Z" fill="#2a6ff0" />
      <path d="M505 898L533 865H580L590 898Z" fill="#1568e8" />
      <path d="M585 865L590 898H700L688 865Z" fill="url(#w4)" />
      <path d="M688 865H745L780 898H700Z" fill="#0d4fdc" />
      <path d="M700 865L712 898M722 865L735 898" stroke="#6aa8f5" strokeWidth={2} />
      <path d="M900 898L960 865H1040L980 898Z" fill="#0a2f9a" />
      <path d="M955 898L1000 865H1012L975 898Z" fill="#2a70e0" />
      <path d="M1000 898L1042 865L1406 865C1408 880 1406 890 1404 898Z" fill="url(#w3)" />
    </svg>
  );
}

export default function App() {
  return (
    <div className="relative h-[898px] w-[1498px] overflow-hidden bg-gradient-to-r from-[#061a38] via-[#06183a] to-[#010a1e] pl-[43px] pt-[29px] font-['Roboto',sans-serif]">
      <Wallpaper />
      <div className="relative flex h-[836px] w-[1419px] flex-col border border-[#3a9ad9] bg-[#222933]">
        <TitleBar />
        <MenuTabs />
        <Ribbon />
        <DocTabs />
        <div className="ml-[3px] flex h-[625px] w-[1410px] shrink-0 bg-[#3b4453] pb-[4px] pl-px pt-[5px]">
          <div className="relative h-[616px] w-[1147px] shrink-0 overflow-hidden bg-[#d6d6d6]">
            <Drawing />
            <PropsPanel />
            <CommandBar />
          </div>
          <SideTabs />
          <TaskPane />
        </div>
        <StatusBar />
      </div>
      <div className="absolute left-[1301px] top-[840px] font-['Liberation_Sans'] text-[29px] font-bold leading-[36px] text-[#c8ccd2]/40">SOFTPEDIA</div>
    </div>
  );
}
